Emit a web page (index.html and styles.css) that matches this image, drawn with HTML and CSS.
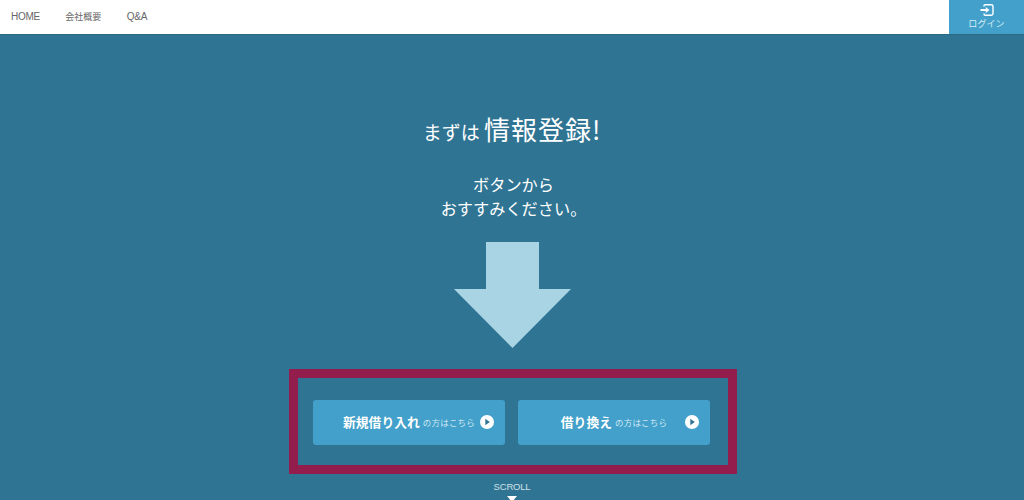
FILE: index.html
```html
<!DOCTYPE html>
<html lang="ja">
<head>
<meta charset="utf-8">
<title>まずは情報登録</title>
<link rel="stylesheet" href="styles.css">
</head>
<body>
<header class="topbar">
  <nav class="nav">
    <a class="nav-link" href="#">HOME</a>
    <a class="nav-link nav-link-ja" href="#">会社概要</a>
    <a class="nav-link" href="#">Q&amp;A</a>
  </nav>
  <a class="login" href="#">
    <svg class="login-icon" viewBox="0 0 14 12" width="14" height="12" aria-hidden="true">
      <path d="M4 2.500V2Q4 .8 5.200 .8H11.200Q13 .8 13 2.500V9.500Q13 11.200 11.200 11.200H5.200Q4 11.200 4 10V9.500" fill="none" stroke="#fff" stroke-width="1.4"/>
      <path d="M0.500 5.100H5.800V3L9.400 6L5.800 9V6.900H0.500Z" fill="#fff"/>
    </svg>
    <span class="login-text">ログイン</span>
  </a>
</header>
<main class="hero">
  <h1 class="title">まずは <span class="title-big">情報登録!</span></h1>
  <p class="lead">ボタンから<br>おすすみください。</p>
  <svg class="arrow" viewBox="0 0 117 106" width="117" height="106" aria-hidden="true">
    <path d="M32 0H85V47H117L58.500 106L0 47H32Z" fill="#a9d4e3"/>
  </svg>
  <div class="cta-box">
    <a class="cta" href="#">
      <span class="cta-text"><b class="cta-main">新規借り入れ</b><span class="cta-sub">の方はこちら</span></span>
      <svg class="cta-icon" viewBox="0 0 14 14" width="14" height="14" aria-hidden="true"><circle cx="7" cy="7" r="7" fill="#fff"/><path d="M5.300 3.700L9.800 7L5.300 10.300Z" fill="#2f7493"/></svg>
    </a>
    <a class="cta" href="#">
      <span class="cta-text"><b class="cta-main">借り換え</b><span class="cta-sub">の方はこちら</span></span>
      <svg class="cta-icon" viewBox="0 0 14 14" width="14" height="14" aria-hidden="true"><circle cx="7" cy="7" r="7" fill="#fff"/><path d="M5.300 3.700L9.800 7L5.300 10.300Z" fill="#2f7493"/></svg>
    </a>
  </div>
  <div class="scroll">
    <span class="scroll-text">SCROLL</span>
    <span class="scroll-mark"></span>
  </div>
</main>
</body>
</html>
```

FILE: styles.css
```css
* { box-sizing: border-box; }
html, body { margin: 0; height: 500px; overflow: hidden; }
body {
  font-family: "Noto Sans CJK JP", "Liberation Sans", sans-serif;
  background: #2f7493;
}
a { text-decoration: none; }
.topbar {
  display: flex;
  justify-content: space-between;
  height: 35px;
  background: #fff;
  border-bottom: 1px solid #2a6a87;
}
.nav {
  display: flex;
  align-items: center;
  gap: 25.500px;
  padding-left: 11px;
  padding-bottom: 2px;
}
.nav-link {
  font-family: "Liberation Sans", "Noto Sans CJK JP", sans-serif;
  font-size: 10px;
  letter-spacing: -0.3px;
  color: #666;
}
.nav-link-ja { font-size: 9px; letter-spacing: 0; }
.login {
  width: 75px;
  background: #42a0ca;
  display: flex;
  flex-direction: column;
  align-items: center;
  padding-top: 4px;
  color: #d6edf6;
}
.login-icon { display: block; }
.login-text { font-size: 9px; line-height: 12px; margin-top: 2px; letter-spacing: 0.1px; }
.hero {
  display: flex;
  flex-direction: column;
  align-items: center;
  height: 465px;
  overflow: hidden;
  color: #fff;
}
.hero > * { flex-shrink: 0; }
.title {
  margin: 74px 0 0;
  font-size: 19px;
  font-weight: 400;
  line-height: 40px;
  height: 40px;
}
.title-big { font-size: 26px; letter-spacing: 1px; }
.lead {
  margin: 23px 0 0;
  padding-left: 3px;
  font-size: 16.200px;
  line-height: 24px;
  text-align: center;
}
.arrow { display: block; margin-top: 22px; }
.cta-box {
  margin: 21px 0 0 2px;
  width: 448px;
  height: 105px;
  border: 9px solid #931e4e;
  display: flex;
  gap: 13px;
  padding: 22px 0 0 15px;
}
.cta {
  position: relative;
  width: 192px;
  height: 45px;
  border-radius: 3px;
  background: #42a0ca;
  display: flex;
  align-items: center;
  color: #fff;
}
.cta-text { display: flex; align-items: center; width: 100%; justify-content: center; padding-bottom: 2px; }
.cta-main { font-size: 12.800px; font-weight: 700; }
.cta-sub { font-size: 8.500px; margin-left: 3px; color: #cfe8f3; letter-spacing: 0.2px; }
.cta-icon { position: absolute; right: 11px; top: 15px; }
.scroll {
  margin-top: 7px;
  display: flex;
  flex-direction: column;
  align-items: center;
}
.scroll-text {
  font-family: "Liberation Sans", sans-serif;
  font-size: 9.500px;
  letter-spacing: -0.2px;
  line-height: 12px;
  color: #cfe0e8;
}
.scroll-mark {
  margin-top: 3px;
  width: 0;
  height: 0;
  border-left: 5px solid transparent;
  border-right: 5px solid transparent;
  border-top: 6px solid #fff;
}
```
